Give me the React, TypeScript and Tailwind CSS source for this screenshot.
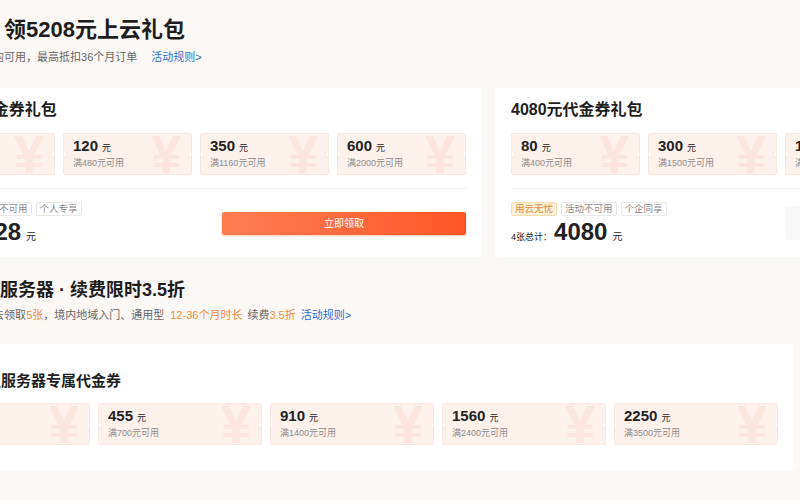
import React from "react";

type Coupon = { value: string; min: string };

const font = { fontFamily: '"Liberation Sans", "Noto Sans CJK SC", sans-serif' };

function CouponCard({ c, w }: { c: Coupon; w: string }) {
  return (
    <div className={`relative h-[42px] shrink-0 overflow-hidden rounded-[2px] border border-[#f9e6de] bg-[#fdf1ec] pl-[9px] pt-[3px] ${w}`}>
      <span className="absolute right-[10px] top-[-7px] text-[54px] font-bold leading-none text-[#fbe5dd]">¥</span>
      <span className="absolute left-[-4px] top-[17px] h-[7px] w-[7px] rounded-full border border-[#f9e6de] bg-white" />
      <span className="absolute right-[-4px] top-[17px] h-[7px] w-[7px] rounded-full border border-[#f9e6de] bg-white" />
      <div className="relative flex items-baseline text-[#222]">
        <span className="text-[15px] font-bold leading-[18px]">{c.value}</span>
        <span className="ml-[4px] text-[9px]">元</span>
      </div>
      <div className="relative mt-[1px] text-[9px] leading-[12px] text-[#8a8a8a]">满{c.min}元可用</div>
    </div>
  );
}

function Tag({ text, hot }: { text: string; hot?: boolean }) {
  return (
    <span
      className={
        hot
          ? "h-[14px] rounded-[2px] border border-[#f6dcae] bg-[#fdf0d9] px-[3px] text-[9.5px] leading-[12px] text-[#e0893a]"
          : "h-[14px] rounded-[2px] border border-[#e8e8e8] px-[3px] text-[9.5px] leading-[12px] text-[#8a8a8a]"
      }
    >
      {text}
    </span>
  );
}

function GiftCard({
  title,
  coupons,
  tags,
  total,
  active,
}: {
  title: string;
  coupons: Coupon[];
  tags: string[];
  total: string;
  active?: boolean;
}) {
  return (
    <div className="w-[572px] shrink-0 rounded-[4px] bg-white px-[16px] pb-[13px] pt-[12px]">
      <div className="text-[16px] font-bold leading-[20px] text-[#1f1f1f]">{title}</div>
      <div className="mt-[13px] flex gap-[8px]">
        {coupons.map((c) => (
          <CouponCard key={c.value} c={c} w="w-[129px]" />
        ))}
      </div>
      <div className="mt-[13px] h-px bg-[#f6efeb]" />
      <div className="mt-[13px] flex items-center justify-between">
        <div>
          <div className="flex gap-[4px]">
            {tags.map((t, i) => (
              <Tag key={t} text={t} hot={i === 0} />
            ))}
          </div>
          <div className="mt-[4px] flex h-[24px] items-baseline text-[#222]">
            <span className="text-[9px]">{coupons.length}张总计：</span>
            <span className="ml-[2px] text-[24px] font-bold leading-[24px]">{total}</span>
            <span className="ml-[5px] text-[10px]">元</span>
          </div>
        </div>
        {active ? (
          <button className="h-[23px] w-[244px] rounded-[2px] bg-gradient-to-r from-[#ff7d52] to-[#ff5526] text-[10px] text-white shadow-[0_1px_2px_rgba(255,86,38,0.35)]">
            立即领取
          </button>
        ) : (
          <button className="h-[34px] w-[266px] rounded-[2px] bg-[#f8f8f8] text-[10px] text-[#bbb]">已领取</button>
        )}
      </div>
    </div>
  );
}

export default function App() {
  const left: Coupon[] = [
    { value: "58", min: "200" },
    { value: "120", min: "480" },
    { value: "350", min: "1160" },
    { value: "600", min: "2000" },
  ];
  const right: Coupon[] = [
    { value: "80", min: "400" },
    { value: "300", min: "1500" },
    { value: "1200", min: "4000" },
    { value: "2500", min: "8000" },
  ];
  const server: Coupon[] = [
    { value: "130", min: "200" },
    { value: "455", min: "700" },
    { value: "910", min: "1400" },
    { value: "1560", min: "2400" },
    { value: "2250", min: "3500" },
  ];

  return (
    <div className="h-[500px] w-[800px] overflow-hidden bg-[#fcf8f5]" style={font}>
      <div className="ml-[-90px] w-[1200px]">
        <section className="pt-[16px]">
          <h1 className="whitespace-nowrap text-[22px] font-bold leading-[28px] text-[#1d1d1d]">新客专享 领5208元上云礼包</h1>
          <p className="mt-[5px] whitespace-nowrap text-[11px] leading-[16px] text-[#666]">
            4张代金券全产品均可用，最高抵扣36个月订单
            <span className="ml-[14px] text-[#2f6cd2]">活动规则&gt;</span>
          </p>
          <div className="mt-[23px] flex gap-[13px]">
            <GiftCard
              title="1128元代金券礼包"
              coupons={left}
              tags={["用云无忧", "活动不可用", "个人专享"]}
              total="1128"
              active
            />
            <GiftCard
              title="4080元代金券礼包"
              coupons={right}
              tags={["用云无忧", "活动不可用", "个企同享"]}
              total="4080"
            />
          </div>
        </section>

        <section className="mt-[22px]">
          <h2 className="whitespace-nowrap text-[18px] font-bold leading-[22px] text-[#1d1d1d]">入门通用型服务器 · 续费限时3.5折</h2>
          <p className="mt-[6px] whitespace-nowrap text-[11px] leading-[16px] text-[#666]">
            每位新用户可1次去领取<span className="text-[#ef8a3c]">5张</span>，境内地域入门、通用型
            <span className="ml-[6px] text-[#ef8a3c]">12-36个月时长</span>
            <span className="ml-[5px]">续费</span>
            <span className="text-[#ef8a3c]">3.5折</span>
            <span className="ml-[5px] text-[#2f6cd2]">活动规则&gt;</span>
          </p>
          <div className="mt-[21px] w-[884px] rounded-[4px] bg-white px-[16px] pb-[26px] pt-[27px]">
            <div className="whitespace-nowrap text-[15px] font-bold leading-[20px] text-[#1f1f1f]">入门通用型服务器专属代金券</div>
            <div className="mt-[12px] flex gap-[8px]">
              {server.map((c) => (
                <CouponCard key={c.value} c={c} w="w-[164px]" />
              ))}
            </div>
          </div>
        </section>
      </div>
    </div>
  );
}
